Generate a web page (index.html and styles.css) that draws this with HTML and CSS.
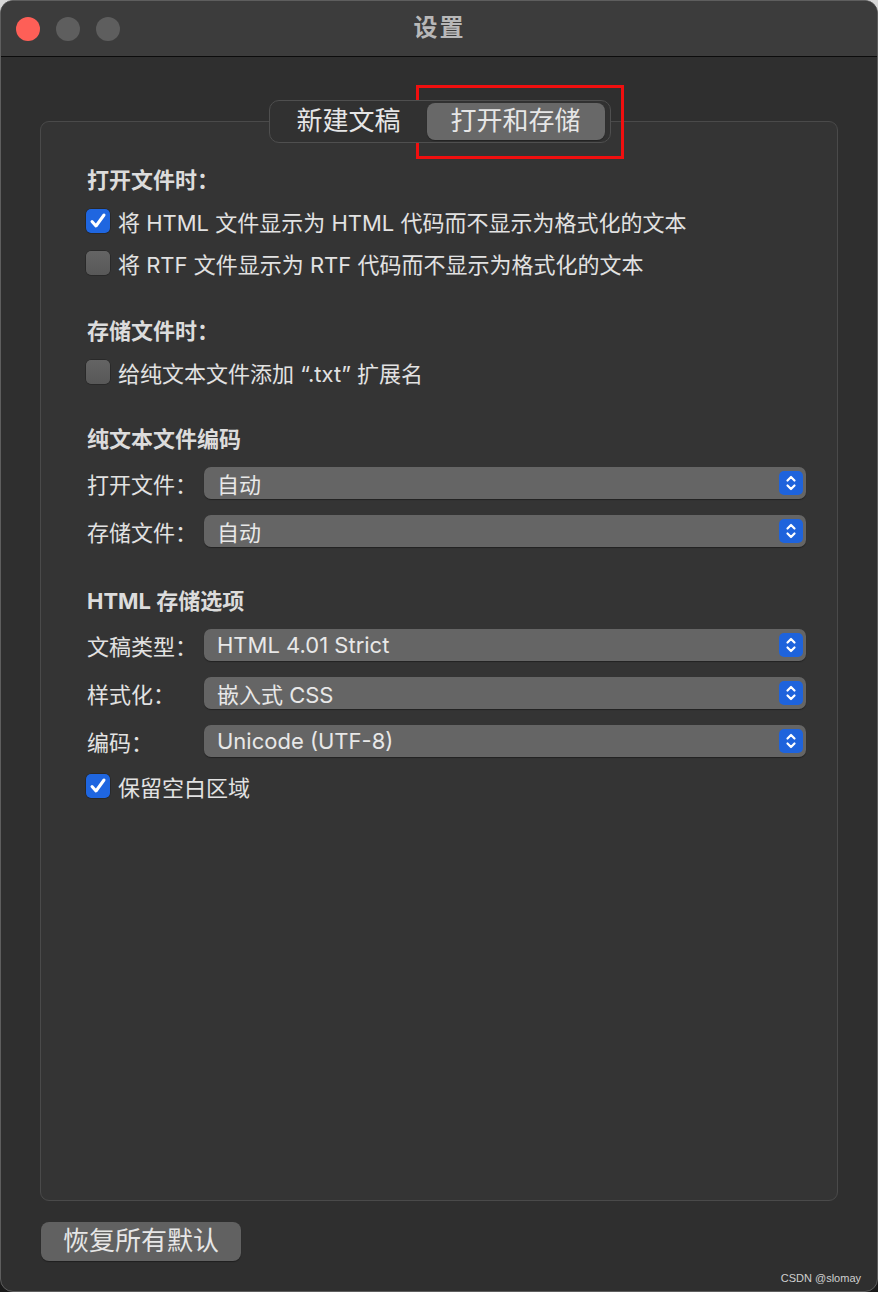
FILE: index.html
```html
<!DOCTYPE html>
<html>
<head>
	<meta charset="utf-8">
	<title>设置</title>
	<link rel="stylesheet" href="styles.css">
</head>
<body>
	<div class="window">
		<div class="titlebar">
			<div class="lights">
				<span class="light red"></span>
				<span class="light"></span>
				<span class="light"></span>
			</div>
			<div class="title">设置</div>
		</div>
		<div class="content">
			<div class="tabs">
				<div class="tab">新建文稿</div>
				<div class="tab active">打开和存储</div>
			</div>
			<div class="panel">
				<div class="section first">
					<div class="section-title">打开文件时：</div>
					<div class="check-row"><span class="box checked"></span>将 HTML 文件显示为 HTML 代码而不显示为格式化的文本</div>
					<div class="check-row"><span class="box"></span>将 RTF 文件显示为 RTF 代码而不显示为格式化的文本</div>
				</div>
				<div class="section second">
					<div class="section-title">存储文件时：</div>
					<div class="check-row"><span class="box"></span>给纯文本文件添加 “.txt” 扩展名</div>
				</div>
				<div class="section">
					<div class="section-title">纯文本文件编码</div>
					<div class="popup-row">
						<div class="label">打开文件：</div>
						<div class="popup"><span>自动</span><span class="stepper"></span></div>
					</div>
					<div class="popup-row">
						<div class="label">存储文件：</div>
						<div class="popup"><span>自动</span><span class="stepper"></span></div>
					</div>
				</div>
				<div class="section">
					<div class="section-title">HTML 存储选项</div>
					<div class="popup-row">
						<div class="label">文稿类型：</div>
						<div class="popup"><span>HTML 4.01 Strict</span><span class="stepper"></span></div>
					</div>
					<div class="popup-row">
						<div class="label">样式化：</div>
						<div class="popup"><span>嵌入式 CSS</span><span class="stepper"></span></div>
					</div>
					<div class="popup-row">
						<div class="label">编码：</div>
						<div class="popup"><span>Unicode (UTF-8)</span><span class="stepper"></span></div>
					</div>
					<div class="check-row"><span class="box checked"></span>保留空白区域</div>
				</div>
			</div>
			<div class="footer">
				<div class="button">恢复所有默认</div>
			</div>
		</div>
		<div class="highlight"></div>
		<div class="watermark">CSDN @slomay</div>
	</div>
</body>
</html>
```

FILE: styles.css
```css
body {
	margin: 0;
	background: linear-gradient(#d8d8d8 0, #d8d8d8 30px, #1a1a1a 60px);
	font-family: Inter, "Noto Sans CJK SC", sans-serif;
	color: #e2e2e2;
}

.window {
	position: relative;
	box-sizing: border-box;
	width: 878px;
	height: 1292px;
	background-color: #2f2f2f;
	border: 1px solid #5e5e5e;
	border-radius: 13px;
	overflow: hidden;
}

.titlebar {
	position: relative;
	display: flex;
	align-items: center;
	height: 55px;
	background-color: #3c3c3c;
	border-bottom: 1px solid #0c0c0c;
}

.lights {
	display: flex;
	gap: 16px;
	padding-left: 15px;
}

.light {
	width: 24px;
	height: 24px;
	border-radius: 50%;
	background-color: #5e5e5e;
}

.light.red {
	background-color: #fe5f57;
}

.title {
	flex: 1;
	margin-left: -104px;
	padding-bottom: 6px;
	text-align: center;
	font-size: 24px;
	font-weight: bold;
	color: #b8b8b8;
	letter-spacing: 2px;
	transform: translateX(-7px);
}

.content {
	padding: 43px 39px 0 39px;
}

.tabs {
	position: relative;
	z-index: 1;
	display: flex;
	gap: 2px;
	width: max-content;
	margin: 0 auto -22px auto;
	padding: 2px 5px 2px 2px;
	background-color: #313131;
	border: 1px solid #4f4f4f;
	border-radius: 10px;
	transform: translateX(1px);
}

.tab {
	height: 37px;
	line-height: 35px;
	padding: 0 24px;
	font-size: 26px;
	color: #e6e6e6;
	border-radius: 8px;
}

.tab.active {
	background-color: #686868;
	box-shadow: 0 1px 1px rgba(0,0,0,0.3);
}

.panel {
	box-sizing: border-box;
	height: 1080px;
	padding: 40px 31px 0 46px;
	background-color: #343434;
	border: 1px solid #4a4a4a;
	border-radius: 9px;
}

.section {
	margin-top: 28px;
}

.section.first {
	margin-top: 0;
}

.section.second {
	margin-top: 29px;
}

.section-title {
	height: 32px;
	line-height: 36px;
	margin-bottom: 6px;
	font-size: 22px;
	font-weight: bold;
	color: #dcdcdc;
}

.check-row {
	display: flex;
	align-items: center;
	gap: 8px;
	height: 42px;
	margin-left: -1px;
	font-size: 22px;
}

.box {
	box-sizing: border-box;
	width: 24px;
	height: 24px;
	border-radius: 5px;
	background: linear-gradient(#646464, #585858);
	box-shadow: 0 0 0 0.5px rgba(0,0,0,0.4);
}

.box.checked {
	background: #1f66e0 url("data:image/svg+xml;utf8,<svg xmlns='http://www.w3.org/2000/svg' viewBox='0 0 24 24'><path d='M6 12.5l4 4.5 8-11' fill='none' stroke='white' stroke-width='3' stroke-linecap='round' stroke-linejoin='round'/></svg>") no-repeat center / 24px 24px;
}

.popup-row {
	display: flex;
	align-items: center;
	height: 48px;
	font-size: 22px;
}

.label {
	width: 117px;
}

.popup {
	flex: 1;
	display: flex;
	align-items: center;
	justify-content: space-between;
	box-sizing: border-box;
	height: 32px;
	padding: 0 3px 0 13px;
	background-color: #656565;
	border-radius: 7px;
	box-shadow: 0 1px 1px rgba(0,0,0,0.35);
	color: #e8e8e8;
}

.stepper {
	width: 24px;
	height: 24px;
	border-radius: 5px;
	background: #1e63dc url("data:image/svg+xml;utf8,<svg xmlns='http://www.w3.org/2000/svg' viewBox='0 0 24 24'><path d='M8.5 9.5l3.5-3.5 3.5 3.5M8.5 14.5l3.5 3.5 3.5-3.5' fill='none' stroke='white' stroke-width='2.2' stroke-linecap='round' stroke-linejoin='round'/></svg>") no-repeat center / 24px 24px;
}

.footer {
	padding-top: 21px;
}

.button {
	width: 200px;
	height: 39px;
	line-height: 37px;
	margin-left: 1px;
	text-align: center;
	font-size: 26px;
	color: #e6e6e6;
	background-color: #616161;
	border-radius: 8px;
	box-shadow: 0 1px 1px rgba(0,0,0,0.35);
}

.highlight {
	position: absolute;
	left: 415px;
	top: 84px;
	width: 202px;
	height: 68px;
	border: 3px solid #f00f0f;
}

.watermark {
	position: absolute;
	right: 16px;
	bottom: 7px;
	font-family: "Liberation Sans", sans-serif;
	font-size: 11px;
	color: #d0d0d0;
}
```
